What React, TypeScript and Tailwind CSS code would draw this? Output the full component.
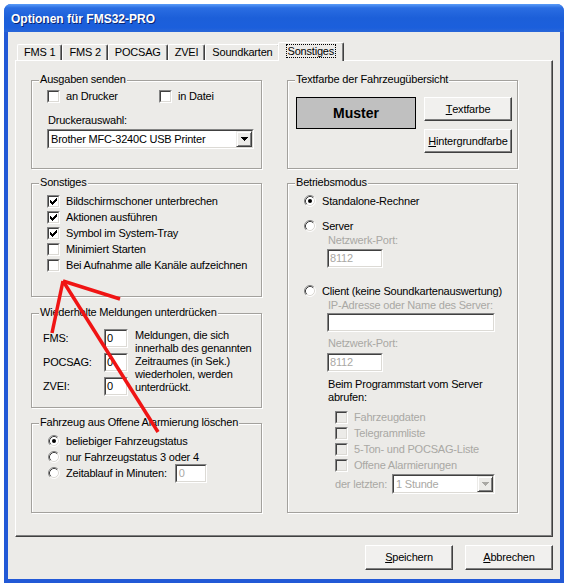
import React from "react";

const CHECK = ["......X", ".....XX", "X...XXX", "XX.XXX.", "XXXXX..", ".XXX...", "..X...."];

function CheckMark() {
  const rects: React.ReactNode[] = [];
  CHECK.forEach((row, y) =>
    row.split("").forEach((c, x) => {
      if (c === "X") rects.push(<rect key={`${x}-${y}`} x={x} y={y} width="1" height="1" />);
    })
  );
  return (
    <svg width="7" height="7" viewBox="0 0 7 7" fill="#000" shapeRendering="crispEdges">
      {rects}
    </svg>
  );
}

function CheckBox({ checked = false, disabled = false }: { checked?: boolean; disabled?: boolean }) {
  return (
    <span className="flex size-[13px] shrink-0 border border-t-[#848484] border-l-[#848484] border-r-white border-b-white">
      <span
        className={`flex flex-1 items-center justify-center border border-t-[#404040] border-l-[#404040] border-r-[#dcdad5] border-b-[#dcdad5] ${
          disabled ? "bg-[#ecebe8]" : "bg-white"
        }`}
      >
        {checked && <CheckMark />}
      </span>
    </span>
  );
}

function CheckRow({ label, checked, disabled }: { label: string; checked?: boolean; disabled?: boolean }) {
  return (
    <div className="flex h-[16px] items-center">
      <CheckBox checked={checked} disabled={disabled} />
      <span className={`ml-[6px] ${disabled ? "text-[#a9a8a4]" : ""}`}>{label}</span>
    </div>
  );
}

function Radio({ checked = false }: { checked?: boolean }) {
  return (
    <svg width="12" height="12" viewBox="0 0 12 12" className="shrink-0">
      <circle cx="6" cy="6" r="5" fill="#fff" />
      <path d="M2.11 9.89A5.5 5.5 0 0 1 9.89 2.11" fill="none" stroke="#848484" />
      <path d="M9.89 2.11A5.5 5.5 0 0 1 2.11 9.89" fill="none" stroke="#fff" />
      <path d="M2.82 9.18A4.5 4.5 0 0 1 9.18 2.82" fill="none" stroke="#404040" />
      <path d="M9.18 2.82A4.5 4.5 0 0 1 2.82 9.18" fill="none" stroke="#dcdad5" />
      {checked && <circle cx="6" cy="6" r="2" fill="#000" />}
    </svg>
  );
}

function RadioRow({ label, checked }: { label: string; checked?: boolean }) {
  return (
    <div className="flex h-[16px] items-center">
      <Radio checked={checked} />
      <span className="ml-[6px]">{label}</span>
    </div>
  );
}

function Sunken({
  className = "",
  disabled = false,
  children,
}: {
  className?: string;
  disabled?: boolean;
  children?: React.ReactNode;
}) {
  return (
    <div className={`flex border border-t-[#848484] border-l-[#848484] border-r-white border-b-white ${className}`}>
      <div
        className={`flex min-w-0 flex-1 items-center border border-t-[#404040] border-l-[#404040] border-r-[#dcdad5] border-b-[#dcdad5] bg-white ${
          disabled ? "text-[#a9a8a4]" : ""
        }`}
      >
        {children}
      </div>
    </div>
  );
}

function Select({ className, value, disabled }: { className: string; value: string; disabled?: boolean }) {
  return (
    <Sunken className={className} disabled={disabled}>
      <span className="flex-1 truncate pl-[2px]">{value}</span>
      <span className="flex size-[16px] shrink-0 items-center justify-center border border-t-[#ecebe8] border-l-[#ecebe8] border-r-[#404040] border-b-[#404040] bg-[#ecebe8] shadow-[inset_1px_1px_0_#fff,inset_-1px_-1px_0_#808080]">
        <svg width="7" height="4" viewBox="0 0 7 4" fill={disabled ? "#a9a8a4" : "#000"} shapeRendering="crispEdges">
          <path d="M0 0h7v1h-1v1h-1v1h-1v1h-1v-1h-1v-1h-1v-1h-1z" />
        </svg>
      </span>
    </Sunken>
  );
}

function Btn({ className, children }: { className: string; children: React.ReactNode }) {
  return (
    <div
      className={`flex items-center justify-center border border-t-white border-l-white border-r-[#404040] border-b-[#404040] bg-[#f1f0ee] shadow-[inset_-1px_-1px_0_#808080] ${className}`}
    >
      {children}
    </div>
  );
}

function Group({ title, className, children }: { title: string; className: string; children?: React.ReactNode }) {
  return (
    <div className={`border border-[#a3a19d] shadow-[inset_1px_1px_0_#fff,1px_1px_0_#fff] ${className}`}>
      <div className="-mt-[8px] ml-[7px] w-fit bg-[#ecebe8] px-[1px]">{title}</div>
      {children}
    </div>
  );
}

const tabs = ["FMS 1", "FMS 2", "POCSAG", "ZVEI", "Soundkarten"];

export default function App() {
  return (
    <div className="relative h-[587px] w-[571px] overflow-hidden bg-white font-['Liberation_Sans',Arial,sans-serif] text-[11px] leading-[13px] tracking-[-0.2px] text-black">
      <div className="ml-[4px] mt-[4px] flex h-[579px] w-[560px] flex-col rounded-t-[7px] bg-[#2259d6]">
        <div className="flex h-[28px] items-center rounded-t-[7px] bg-[linear-gradient(to_bottom,#5a9cf8_0%,#2a6de2_14%,#1c5fd9_50%,#1b5fdc_85%,#2a66d8_100%)] pl-[7px] pt-[2px]">
          <span className="text-[12px] font-bold tracking-normal text-white [text-shadow:1px_1px_0_#0a2470]">
            Optionen für FMS32-PRO
          </span>
        </div>
        <div className="mx-[4px] mb-[4px] flex flex-1 flex-col bg-[#ecebe8] pl-[7px]">
          <div className="mt-[10px] flex h-[18px] items-end pl-[2px]">
            {tabs.map((t) => (
              <div
                key={t}
                className="h-[16px] rounded-t-[2px] border-l border-t border-r border-l-white border-t-white border-r-[#404040] px-[6px] pt-[1px] shadow-[inset_-1px_0_0_#808080]"
              >
                {t}
              </div>
            ))}
            <div className="relative z-10 -mx-[2px] -mb-[1px] h-[19px] rounded-t-[2px] border-l border-t border-r border-l-white border-t-white border-r-[#404040] bg-[#ecebe8] px-[8px] pt-[2px] shadow-[inset_-1px_0_0_#808080]">
              <span className="px-[1px] outline outline-1 outline-dotted outline-[#000]">Sonstiges</span>
            </div>
          </div>

          <div className="grid h-[477px] w-[538px] grid-cols-[231px_231px] content-start gap-x-[25px] border border-t-white border-l-white border-r-[#404040] border-b-[#404040] pl-[15px] pt-[19px] shadow-[inset_-1px_-1px_0_#808080]">
            <div className="flex flex-col">
              <Group title="Ausgaben senden" className="h-[89px]">
                <div className="mt-[4px] flex h-[13px] items-center pl-[15px]">
                  <div className="flex w-[112px] items-center">
                    <CheckBox />
                    <span className="ml-[6px]">an Drucker</span>
                  </div>
                  <div className="flex items-center">
                    <CheckBox />
                    <span className="ml-[6px]">in Datei</span>
                  </div>
                </div>
                <div className="mt-[11px] pl-[16px]">Druckerauswahl:</div>
                <Select className="ml-[15px] mt-[2px] h-[20px] w-[207px]" value="Brother MFC-3240C USB Printer" />
              </Group>

              <Group title="Sonstiges" className="mt-[14px] h-[114px]">
                <div className="mt-[4px] pl-[15px]">
                  <CheckRow checked label="Bildschirmschoner unterbrechen" />
                  <CheckRow checked label="Aktionen ausführen" />
                  <CheckRow checked label="Symbol im System-Tray" />
                  <CheckRow label="Minimiert Starten" />
                  <CheckRow label="Bei Aufnahme alle Kanäle aufzeichnen" />
                </div>
              </Group>

              <Group title="Wiederholte Meldungen unterdrücken" className="mt-[16px] h-[95px]">
                <div className="mt-[10px] flex pl-[11px]">
                  <div className="flex flex-col gap-[5px]">
                    {["FMS:", "POCSAG:", "ZVEI:"].map((l) => (
                      <div key={l} className="flex h-[19px] items-center">
                        <span className="w-[61px]">{l}</span>
                        <Sunken className="h-[19px] w-[24px]">
                          <span className="pl-[1px]">0</span>
                        </Sunken>
                      </div>
                    ))}
                  </div>
                  <div className="ml-[7px]">
                    Meldungen, die sich
                    <br />
                    innerhalb des genannten
                    <br />
                    Zeitraumes (in Sek.)
                    <br />
                    wiederholen, werden
                    <br />
                    unterdrückt.
                  </div>
                </div>
              </Group>

              <Group title="Fahrzeug aus Offene Alarmierung löschen" className="mt-[15px] h-[90px]">
                <div className="mt-[4px] pl-[16px]">
                  <RadioRow checked label="beliebiger Fahrzeugstatus" />
                  <RadioRow label="nur Fahrzeugstatus 3 oder 4" />
                  <div className="flex h-[16px] items-center">
                    <Radio />
                    <span className="ml-[6px]">Zeitablauf in Minuten:</span>
                    <Sunken disabled className="ml-[8px] h-[19px] w-[32px] shrink-0">
                      <span className="pl-[2px]">0</span>
                    </Sunken>
                  </div>
                </div>
              </Group>
            </div>

            <div className="flex flex-col">
              <Group title="Textfarbe der Fahrzeugübersicht" className="h-[89px]">
                <div className="mt-[11px] flex pl-[8px]">
                  <div className="flex h-[32px] w-[120px] items-center justify-center border border-black bg-[#c0c0c0] text-[14px] font-bold tracking-normal">
                    Muster
                  </div>
                  <div className="ml-[8px] flex flex-col gap-[8px]">
                    <Btn className="h-[24px] w-[88px]">
                      <span className="underline">T</span>extfarbe
                    </Btn>
                    <Btn className="h-[24px] w-[88px]">
                      <span className="underline">H</span>intergrundfarbe
                    </Btn>
                  </div>
                </div>
              </Group>

              <Group title="Betriebsmodus" className="mt-[14px] h-[330px]">
                <div className="pl-[16px]">
                  <div className="mt-[4px]">
                    <RadioRow checked label="Standalone-Rechner" />
                  </div>
                  <div className="mt-[9px]">
                    <RadioRow label="Server" />
                  </div>
                  <div className="pl-[23px]">
                    <div className="pl-[1px] text-[#a9a8a4]">Netzwerk-Port:</div>
                    <Sunken disabled className="mt-[2px] h-[19px] w-[56px]">
                      <span className="pl-[1px]">8112</span>
                    </Sunken>
                  </div>
                  <div className="mt-[15px]">
                    <RadioRow label="Client (keine Soundkartenauswertung)" />
                  </div>
                  <div className="pl-[23px]">
                    <div className="pl-[1px] text-[#a9a8a4]">IP-Adresse oder Name des Server:</div>
                    <Sunken disabled className="mt-[1px] h-[19px] w-[168px]" />
                    <div className="mt-[5px] pl-[1px] text-[#a9a8a4]">Netzwerk-Port:</div>
                    <Sunken disabled className="mt-[3px] h-[19px] w-[56px]">
                      <span className="pl-[1px]">8112</span>
                    </Sunken>
                    <div className="mt-[6px] pl-[1px]">
                      Beim Programmstart vom Server
                      <br />
                      abrufen:
                    </div>
                    <div className="mt-[5px] pl-[8px]">
                      <CheckRow disabled label="Fahrzeugdaten" />
                      <CheckRow disabled label="Telegrammliste" />
                      <CheckRow disabled label="5-Ton- und POCSAG-Liste" />
                      <CheckRow disabled label="Offene Alarmierungen" />
                      <div className="mt-[1px] flex h-[20px] items-center">
                        <span className="w-[57px] text-[#a9a8a4]">der letzten:</span>
                        <Select disabled className="h-[20px] w-[103px]" value="1 Stunde" />
                      </div>
                    </div>
                  </div>
                </div>
              </Group>
            </div>
          </div>

          <div className="mt-[8px] flex w-[538px] justify-end gap-[12px]">
            <Btn className="h-[25px] w-[88px]">
              <span className="underline">S</span>peichern
            </Btn>
            <Btn className="h-[25px] w-[88px]">
              <span className="underline">A</span>bbrechen
            </Btn>
          </div>
        </div>
      </div>

      {/* red annotation arrows */}
      <svg className="pointer-events-none absolute left-0 top-0" width="571" height="587">
        <g stroke="#f01414" strokeWidth="3.5" fill="none">
          <line x1="63" y1="281" x2="120" y2="299" />
          <line x1="63" y1="281" x2="52" y2="333" />
          <line x1="63" y1="281" x2="158" y2="432" />
        </g>
      </svg>
    </div>
  );
}
